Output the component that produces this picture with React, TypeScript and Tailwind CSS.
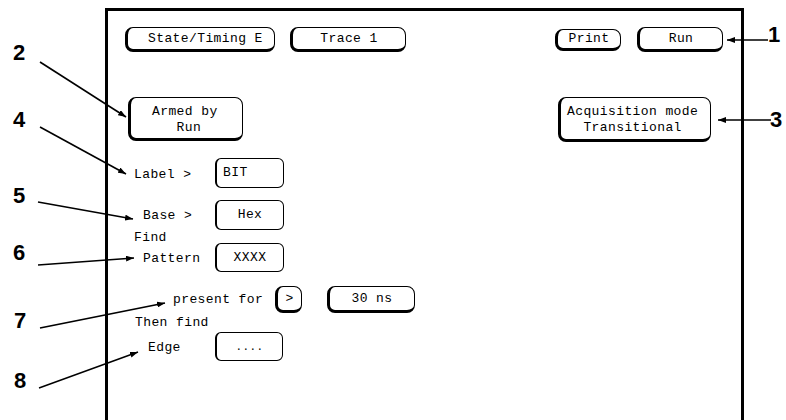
const mono = "font-['Liberation_Mono','DejaVu_Sans_Mono',monospace] text-[13px] tracking-[0.4px] text-black";

// raised soft-key: thin top/right, heavy left/bottom edge
const key = "flex items-center justify-center rounded-[8px] border-t border-r border-l-[3px] border-b-[3px] border-black bg-white leading-[14px]";
// plain entry field
const field = "flex items-center justify-center rounded-[6px] border border-l-[2px] border-black bg-white leading-[14px]";

const callouts = [
  { n: "1", left: "left-[768px]", top: "top-[24px]" },
  { n: "2", left: "left-[13px]", top: "top-[42px]" },
  { n: "3", left: "left-[770px]", top: "top-[109px]" },
  { n: "4", left: "left-[13px]", top: "top-[109px]" },
  { n: "5", left: "left-[13px]", top: "top-[185px]" },
  { n: "6", left: "left-[13px]", top: "top-[242px]" },
  { n: "7", left: "left-[14px]", top: "top-[310px]" },
  { n: "8", left: "left-[14px]", top: "top-[370px]" },
];

const arrows = [
  [768, 40, 727, 40],
  [40, 62, 126, 117],
  [771, 120, 718, 120],
  [40, 127, 126, 174],
  [38, 202, 133, 219],
  [38, 265, 134, 258],
  [40, 328, 165, 303],
  [39, 388, 138, 352],
];

function Leaders() {
  return (
    <svg className="pointer-events-none absolute inset-0" width={786} height={420}>
      <defs>
        <marker id="head" markerUnits="userSpaceOnUse" markerWidth={8} markerHeight={6} refX={8} refY={3} orient="auto">
          <path d="M0,0 L8,3 L0,6 z" fill="#000" />
        </marker>
      </defs>
      {arrows.map(([x1, y1, x2, y2], i) => (
        <line key={i} x1={x1} y1={y1} x2={x2} y2={y2} stroke="#000" strokeWidth={1.6} markerEnd="url(#head)" />
      ))}
    </svg>
  );
}

export default function App() {
  return (
    <div className="relative h-[420px] w-[786px] overflow-hidden bg-white">
      <div className="pl-[105px] pt-[8px]">
        <div className={`flex h-[412px] w-[639px] flex-col border-x-[3px] border-t-[3px] border-black ${mono}`}>
          {/* top soft keys */}
          <div className="mt-[16px] flex h-[25px] items-center pl-[17px] pr-[18px]">
            <div className={`${key} h-[25px] w-[150px] !justify-start pl-[20px]`}>State/Timing E</div>
            <div className={`${key} ml-[15px] h-[25px] w-[116px]`}>Trace 1</div>
            <div className={`${key} ml-auto h-[22px] w-[66px]`}>Print</div>
            <div className={`${key} ml-[16px] h-[25px] w-[86px]`}>Run</div>
          </div>

          {/* arming / acquisition */}
          <div className="mt-[45px] flex h-[45px] items-start justify-between pl-[20px] pr-[30px]">
            <div className={`${key} h-[44px] w-[115px] !items-start !justify-start whitespace-pre pl-[21px] pt-[6px] !leading-[16px]`}>
              {"Armed by\n   Run"}
            </div>
            <div className={`${key} h-[45px] w-[153px] !items-start !justify-start whitespace-pre pl-[6px] pt-[6px] !leading-[16px]`}>
              {"Acquisition mode\n  Transitional"}
            </div>
          </div>

          {/* label */}
          <div className="mt-[16px] flex h-[30px] items-center pl-[26px] leading-[14px]">
            <span className="mt-[3px] w-[81px] whitespace-pre">Label &gt;</span>
            <div className={`${field} h-[30px] w-[69px] !justify-start pl-[6px]`}>BIT</div>
          </div>

          {/* base */}
          <div className="mt-[12px] flex h-[30px] items-center pl-[35px] leading-[14px]">
            <span className="mt-[2px] w-[72px] whitespace-pre">Base &gt;</span>
            <div className={`${field} h-[30px] w-[69px]`}>Hex</div>
          </div>

          <div className="mt-[1px] h-[13px] pl-[26px] leading-[13px]">Find</div>

          {/* pattern */}
          <div className="-mt-[1px] flex h-[29px] items-center pl-[35px] leading-[14px]">
            <span className="mt-[2px] w-[72px]">Pattern</span>
            <div className={`${field} h-[29px] w-[69px]`}>XXXX</div>
          </div>

          {/* duration */}
          <div className="mt-[14px] flex h-[27px] items-center pl-[65px] leading-[14px]">
            <span className="w-[102px] whitespace-pre">present for</span>
            <div className={`${key} h-[27px] w-[27px]`}>&gt;</div>
            <div className={`${key} ml-[25px] h-[27px] w-[88px]`}>30 ns</div>
          </div>

          <div className="mt-[3px] h-[14px] whitespace-pre pl-[27px] leading-[14px]">Then find</div>

          {/* edge */}
          <div className="mt-[2px] flex h-[29px] items-center pl-[40px] leading-[14px]">
            <span className="mt-[2px] w-[67px]">Edge</span>
            <div className={`${field} h-[29px] w-[68px] text-[11px]`}>....</div>
          </div>
        </div>
      </div>

      {callouts.map((c) => (
        <span
          key={c.n}
          className={`absolute ${c.left} ${c.top} font-['Liberation_Sans',Arial,sans-serif] text-[22px] font-bold leading-[22px] text-black`}
        >
          {c.n}
        </span>
      ))}

      <Leaders />
    </div>
  );
}
